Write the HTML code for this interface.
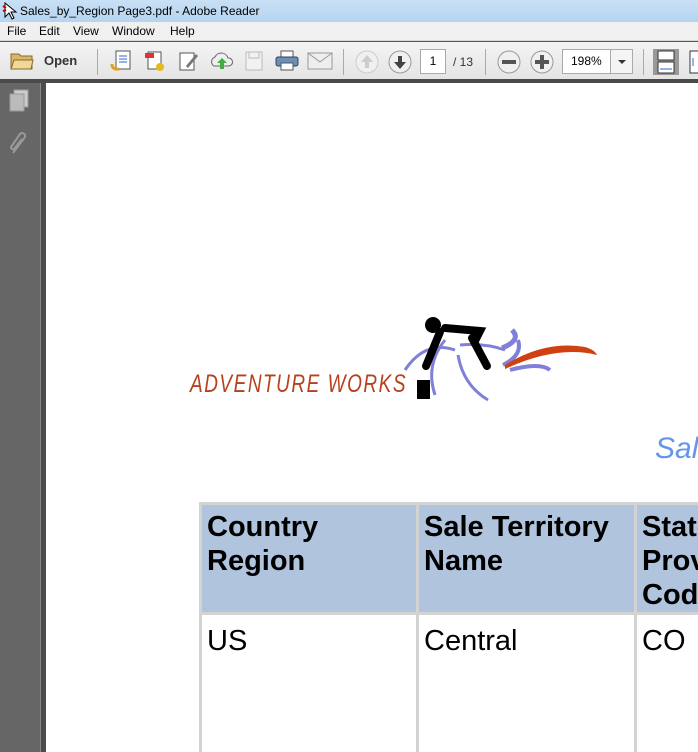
<!DOCTYPE html>
<html><head><meta charset="utf-8"><style>
*{margin:0;padding:0;box-sizing:border-box}
html,body{width:698px;height:752px;overflow:hidden}
body{position:relative;font-family:"Liberation Sans",sans-serif;background:#fff}
.title{position:absolute;left:0;top:0;width:698px;height:22px;background:linear-gradient(#c9e0f5,#b5d4f0);font-size:12px;line-height:22px;padding-left:20px;color:#000}
.menu{position:absolute;left:0;top:22px;width:698px;height:19px;background:#f0f0f0;font-size:12px;line-height:19px;border-bottom:1px solid #d8d8d8}
.menu span{position:absolute;top:0}
.tb{position:absolute;left:0;top:41px;width:698px;height:38px;background:linear-gradient(#f4f4f4,#e4e4e4);border-top:1px solid #555}
.dark{position:absolute;left:0;top:79px;width:698px;height:4px;background:#4a4a4a}
.side{position:absolute;left:0;top:83px;width:40px;height:669px;background:#666}
.side2{position:absolute;left:40px;top:83px;width:1px;height:669px;background:#888}
.side3{position:absolute;left:41px;top:83px;width:5px;height:669px;background:#4c4c4c}
.sep{position:absolute;top:7px;width:1px;height:26px;background:#aaa}
.tbx{position:absolute}
.wrap{position:absolute;left:199px;top:502px;width:499px;height:250px;overflow:hidden}
table{border-collapse:collapse;table-layout:fixed;width:660px}
td{border:3px solid #d3d3d3;vertical-align:top;padding:9px 5px 0;font-size:29px;line-height:34px;white-space:nowrap}
th{border:3px solid #d3d3d3;background:#b0c4de;vertical-align:top;text-align:left;padding:5px 5px 0;font-size:29px;line-height:34px;font-weight:bold;white-space:nowrap}
</style></head><body>
<div class="title"><svg style="position:absolute;left:2px;top:2px" width="16" height="18"><path d="M3 1v14l4-4 3 6 2-1-3-6h5z" fill="#fff" stroke="#000"/><path d="M1 4l3 2M1 9l3-1" stroke="#c00" stroke-width="2"/></svg>Sales_by_Region Page3.pdf - Adobe Reader</div>
<div class="menu"><span style="left:7px">File</span><span style="left:39px">Edit</span><span style="left:73px">View</span><span style="left:112px">Window</span><span style="left:170px">Help</span></div>
<div class="tb">
<svg class="tbx" style="left:10px;top:9px" width="24" height="20"><path d="M1 3h8l2 2h11v13H1z" fill="#d9b66a" stroke="#8a6a2a"/><path d="M1 18l3-9h19l-2 9z" fill="#f0d898" stroke="#8a6a2a"/></svg>
<div class="tbx" style="left:44px;top:11px;font-size:13px;font-weight:bold;color:#333">Open</div>
<div class="sep" style="left:97px"></div>
<svg class="tbx" style="left:110px;top:8px" width="22" height="22"><rect x="6" y="1" width="14" height="18" fill="#fff" stroke="#555"/><path d="M9 6h8M9 9h8M9 12h8" stroke="#36c"/><path d="M2 14q0 6 7 5" stroke="#e0a020" stroke-width="3" fill="none"/></svg>
<svg class="tbx" style="left:144px;top:8px" width="22" height="22"><rect x="4" y="2" width="13" height="17" fill="#fff" stroke="#555"/><rect x="1" y="3" width="9" height="5" fill="#d33"/><circle cx="16" cy="17" r="4" fill="#e8b820"/></svg>
<svg class="tbx" style="left:178px;top:8px" width="22" height="22"><rect x="2" y="3" width="14" height="17" fill="#fff" stroke="#555"/><path d="M8 16l10-12 2 2-10 12z" fill="#777"/></svg>
<svg class="tbx" style="left:209px;top:8px" width="26" height="22"><path d="M5 16a5 5 0 0 1 1-9 7 7 0 0 1 13 1 4 4 0 0 1 1 8z" fill="#eee" stroke="#666"/><path d="M13 8l-5 5h3v6h4v-6h3z" fill="#4a4"/></svg>
<svg class="tbx" style="left:244px;top:8px" width="20" height="22"><rect x="2" y="2" width="16" height="18" fill="#f2f2f2" stroke="#bbb"/><rect x="5" y="2" width="10" height="6" fill="none" stroke="#bbb"/></svg>
<svg class="tbx" style="left:275px;top:8px" width="24" height="22"><rect x="6" y="1" width="12" height="6" fill="#fff" stroke="#555"/><rect x="1" y="7" width="22" height="9" rx="2" fill="#6b8fb8" stroke="#345"/><rect x="6" y="13" width="12" height="7" fill="#fff" stroke="#555"/></svg>
<svg class="tbx" style="left:307px;top:10px" width="26" height="18"><rect x="1" y="1" width="24" height="16" fill="#eee" stroke="#999"/><path d="M1 1l12 9 12-9" stroke="#999" fill="none"/></svg>
<div class="sep" style="left:343px"></div>
<svg class="tbx" style="left:355px;top:8px" width="24" height="24"><circle cx="12" cy="12" r="11" fill="#f0f0f0" stroke="#ccc"/><path d="M12 5l-6 7h4v6h4v-6h4z" fill="#ccc"/></svg>
<svg class="tbx" style="left:388px;top:8px" width="24" height="24"><circle cx="12" cy="12" r="11" fill="#f0f0f0" stroke="#999"/><path d="M12 19l-6-7h4V6h4v6h4z" fill="#444"/></svg>
<div class="tbx" style="left:420px;top:7px;width:26px;height:25px;background:#fff;border:1px solid #aaa;font-size:12px;line-height:23px;text-align:center">1</div>
<div class="tbx" style="left:453px;top:13px;font-size:12px;color:#333">/ 13</div>
<div class="sep" style="left:485px"></div>
<svg class="tbx" style="left:497px;top:8px" width="24" height="24"><circle cx="12" cy="12" r="11" fill="#f0f0f0" stroke="#999"/><rect x="5" y="10" width="14" height="4" fill="#555"/></svg>
<svg class="tbx" style="left:530px;top:8px" width="24" height="24"><circle cx="12" cy="12" r="11" fill="#f0f0f0" stroke="#999"/><path d="M5 10h5V5h4v5h5v4h-5v5h-4v-5H5z" fill="#555"/></svg>
<div class="tbx" style="left:562px;top:7px;width:71px;height:25px;background:#fff;border:1px solid #aaa;font-size:12px;line-height:23px;padding-left:8px">198%</div>
<div class="tbx" style="left:610px;top:8px;width:22px;height:23px;border-left:1px solid #aaa;background:#f4f4f4"><div style="margin:10px auto 0;width:0;height:0;border-left:4px solid transparent;border-right:4px solid transparent;border-top:4px solid #333"></div></div>
<div class="sep" style="left:643px"></div>
<svg class="tbx" style="left:653px;top:7px" width="26" height="26"><rect width="26" height="26" fill="#999"/><rect x="5" y="2" width="16" height="9" fill="#fff" stroke="#333"/><rect x="5" y="13" width="16" height="11" fill="#fff" stroke="#333"/><path d="M7 20h12" stroke="#36c"/></svg>
<svg class="tbx" style="left:689px;top:8px" width="10" height="24"><rect x="1" y="1" width="12" height="22" fill="#fff" stroke="#333"/><path d="M4 8v8" stroke="#36c"/></svg>
</div>
<div class="dark"></div>
<div class="side"></div><div class="side2"></div><div class="side3"></div>
<svg style="position:absolute;left:9px;top:89px" width="22" height="24"><rect x="5" y="1" width="14" height="17" fill="#ccc" stroke="#999"/><rect x="1" y="5" width="14" height="17" fill="#bbb" stroke="#999"/></svg>
<svg style="position:absolute;left:8px;top:131px" width="22" height="26"><path d="M5 22L17 6a3 3 0 0 0-5-3L3 16a2 2 0 0 0 3 2l8-10" fill="none" stroke="#999" stroke-width="2"/></svg>
<div style="position:absolute;left:190px;top:370px;font-size:25px;font-style:italic;color:#b8401c;letter-spacing:2px;transform:scaleX(0.76);transform-origin:left top">ADVENTURE WORKS</div>
<svg style="position:absolute;left:400px;top:310px" width="200" height="95">
<path d="M5 60q20-30 50-20" fill="none" stroke="#8080d8" stroke-width="3"/>
<path d="M35 85q-10-30 10-55" fill="none" stroke="#8080d8" stroke-width="3"/>
<path d="M60 35q25-2 45 5" fill="none" stroke="#8080d8" stroke-width="3"/>
<path d="M58 45q5 30 30 45" fill="none" stroke="#8080d8" stroke-width="3"/>
<circle cx="33" cy="15" r="8" fill="#000"/>
<path d="M45 18l35 3-5 10M72 28l15 28M40 22l-14 34" stroke="#000" stroke-width="8" fill="none" stroke-linecap="round"/>
<rect x="17" y="70" width="13" height="19" fill="#000"/>
<path d="M112 20q10 10-10 18" stroke="#8080d8" stroke-width="5" fill="none"/>
<path d="M118 30q5 15-15 25" stroke="#8080d8" stroke-width="4" fill="none"/>
<path d="M110 60q30-8 40 0" stroke="#8080d8" stroke-width="4" fill="none"/>
<path d="M105 55q40-25 80-18q10 3 12 8q-40-10-92 14z" fill="#d04010"/>
</svg>
<div style="position:absolute;left:655px;top:432px;font-size:30px;font-style:italic;color:#6495ed">Sales</div>
<div class="wrap">
<table>
<colgroup><col style="width:217px"><col style="width:218px"><col style="width:225px"></colgroup>
<tr><th>Country<br>Region</th><th>Sale Territory<br>Name</th><th>State<br>Province<br>Code</th></tr>
<tr><td style="height:160px">US</td><td>Central</td><td>CO</td></tr>
</table>
</div>
</body></html>
